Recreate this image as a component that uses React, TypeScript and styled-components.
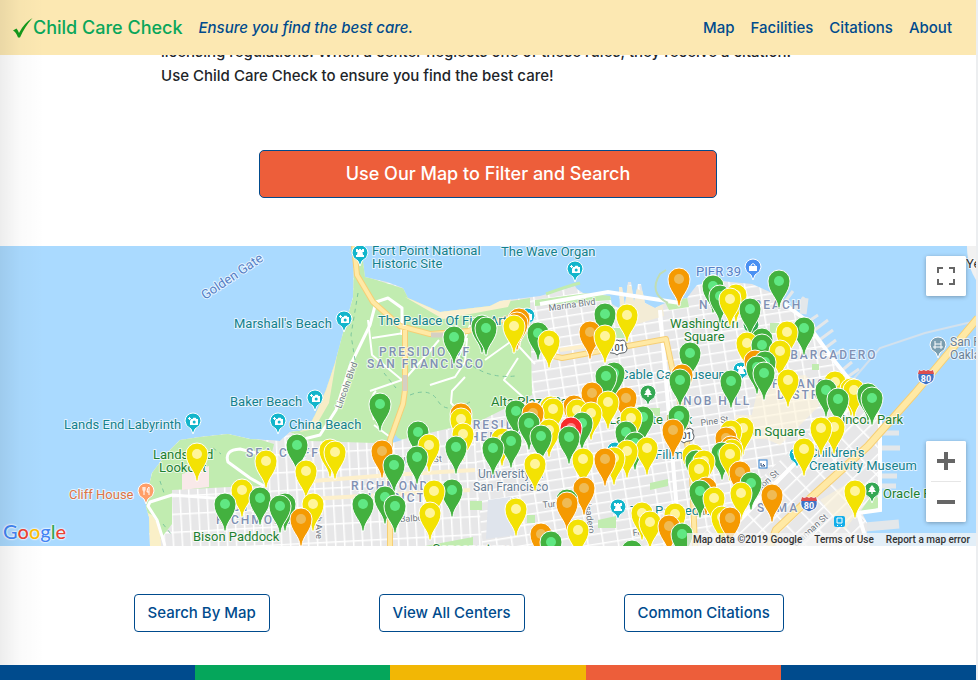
import React from "react";
import styled, { createGlobalStyle } from "styled-components";

const GlobalStyle = createGlobalStyle`
  * { box-sizing: border-box; }
  body { margin: 0; background: #fff; color: #212529; font: 500 15px/24px Inter, sans-serif; }
`;

const navy = "#004b8d";

const Page = styled.div`
  position: relative;
  border-right: 2px solid #eceef0;
`;

const EdgeShade = styled.div`
  position: absolute;
  inset: 0 auto 15px 0;
  width: 44px;
  z-index: 5;
  pointer-events: none;
  background: linear-gradient(to right, rgba(0, 0, 0, 0.07), rgba(0, 0, 0, 0.02) 45%, rgba(0, 0, 0, 0));
`;

const Header = styled.header`
  position: sticky;
  top: 0;
  z-index: 4;
  display: flex;
  align-items: center;
  justify-content: space-between;
  height: 55px;
  padding: 0 24px 0 12px;
  background: #fce8b2;
`;

const Brand = styled.div`
  display: flex;
  align-items: center;
  gap: 16px;
`;

const BrandLink = styled.a`
  display: flex;
  align-items: center;
  color: #0aa65a;
  font-size: 18px;
  text-decoration: none;
`;

const Tagline = styled.em`
  color: ${navy};
`;

const Nav = styled.nav`
  display: flex;
  gap: 16px;
`;

const NavLink = styled.a`
  color: ${navy};
  text-decoration: none;
`;

const Intro = styled.p`
  width: 67%;
  margin: -15px auto 0;
`;

const CtaRow = styled.div`
  display: flex;
  justify-content: center;
  padding: 62px 0 48px;
`;

const Cta = styled.button`
  width: 47%;
  height: 48px;
  border: 1px solid ${navy};
  border-radius: 5px;
  background: #ed5e3a;
  color: #fff;
  font: 500 18px/24px Inter, sans-serif;
`;

const MapFrame = styled.section`
  position: relative;
  height: 300px;
  overflow: hidden;
  background: #aadaff;
`;

const MapSvg = styled.svg`
  display: block;
  width: 100%;
  height: 100%;
  font-family: Roboto, sans-serif;
  font-weight: 400;
`;

const MapButton = styled.button`
  display: flex;
  align-items: center;
  justify-content: center;
  width: 40px;
  height: 40px;
  padding: 0;
  border: 0;
  border-radius: 2px;
  background: #fff;
`;

const ControlBox = styled.div<{ $place: "top" | "bottom" }>`
  position: absolute;
  right: 10px;
  ${(p) => (p.$place === "top" ? "top: 10px;" : "bottom: 24px;")}
  border-radius: 2px;
  background: #fff;
  box-shadow: 0 1px 4px rgba(0, 0, 0, 0.3);
`;

const ControlDivider = styled.div`
  height: 1px;
  margin: 0 5px;
  background: #e6e6e6;
`;

const Attribution = styled.div`
  position: absolute;
  right: 0;
  bottom: 0;
  display: flex;
  gap: 12px;
  height: 13px;
  padding: 1px 6px 0;
  background: rgba(245, 245, 245, 0.75);
  color: #333;
  font: 500 10px/12px Roboto, sans-serif;
`;

const AttributionLink = styled.a`
  color: inherit;
  text-decoration: none;
`;

const GoogleLogo = styled.a`
  position: absolute;
  left: 3px;
  bottom: 2px;
  font: 500 20px/26px Lato, sans-serif;
  text-decoration: none;
  text-shadow: 0 0 2px #fff, 0 0 2px #fff, 0 0 2px #fff;
`;

const Letter = styled.span<{ $color: string }>`
  color: ${(p) => p.$color};
`;

const Actions = styled.div`
  display: grid;
  grid-template-columns: repeat(3, 1fr);
  max-width: 735px;
  margin: 0 auto;
  padding: 48px 0 33px;
`;

const ActionCell = styled.div`
  padding-left: 13px;
`;

const Action = styled.button`
  height: 38px;
  padding: 0 13px;
  border: 1px solid ${navy};
  border-radius: 4px;
  background: #fff;
  color: ${navy};
  font: 500 15px/24px Inter, sans-serif;
  white-space: nowrap;
`;

const Footer = styled.footer`
  display: grid;
  grid-template-columns: repeat(5, 1fr);
  height: 15px;
`;

const Stripe = styled.div<{ $color: string }>`
  background: ${(p) => p.$color};
`;

const Halo = styled.text`
  paint-order: stroke;
  stroke: rgba(255, 255, 255, 0.7);
  stroke-width: 2px;
  stroke-linejoin: round;
`;

type Kind = "poi" | "park" | "area" | "street" | "blue" | "orange" | "campus";
const kinds: Record<Kind, { fill: string; size: number; weight: number; track: number }> = {
  poi: { fill: "#14818c", size: 13, weight: 400, track: 0 },
  park: { fill: "#1d8030", size: 13, weight: 400, track: 0 },
  area: { fill: "#8090b3", size: 12, weight: 500, track: 2 },
  street: { fill: "#6f7780", size: 9, weight: 400, track: 0 },
  blue: { fill: "#5580c6", size: 13, weight: 400, track: 0 },
  orange: { fill: "#dd7344", size: 13, weight: 400, track: 0 },
  campus: { fill: "#6a8096", size: 12, weight: 400, track: 0 },
};

const labels: [string, number, number, Kind, number?][] = [
  ["Fort Point National", 372, 255, "poi"],
  ["Historic Site", 372, 268, "poi"],
  ["The Wave Organ", 501, 256, "poi"],
  ["Marshall's Beach", 234, 328, "poi"],
  ["Baker Beach", 230, 406, "poi"],
  ["China Beach", 289, 429, "poi"],
  ["Lands End Labyrinth", 64, 429, "poi"],
  ["The Palace Of Fine Arts", 378, 325, "poi"],
  ["Cable Car Museum", 620, 379, "poi"],
  ["Children's", 809, 457, "poi"],
  ["Creativity Museum", 809, 470, "poi"],
  ["Fillmore", 655, 459, "poi"],
  ["The Painted Ladies", 630, 515, "poi"],
  ["Washington", 670, 328, "park"],
  ["Square", 684, 341, "park"],
  ["Alta Plaza Park", 491, 406, "park"],
  ["Lafayette Park", 609, 424, "park"],
  ["Union Square", 728, 436, "park"],
  ["Rincon Park", 834, 424, "park"],
  ["Oracle Park", 883, 498, "park"],
  ["Lands End", 153, 459, "park"],
  ["Lookout", 159, 472, "park"],
  ["Bison Paddock", 193, 541, "park"],
  ["Conservatory", 432, 553, "park"],
  ["Cliff House", 69, 499, "orange"],
  ["PIER 39", 696, 276, "blue"],
  ["Golden Gate", 205, 300, "blue", -34],
  ["San Francisco", 950, 346, "campus"],
  ["Oakland Bay", 950, 359, "campus"],
  ["University of", 478, 478, "campus"],
  ["San Francisco", 473, 491, "campus"],
  ["PRESIDIO OF", 379, 356, "area"],
  ["SAN FRANCISCO", 367, 368, "area"],
  ["SEA CLIFF", 246, 457, "area"],
  ["RICHMOND", 351, 490, "area"],
  ["DISTRICT", 358, 502, "area"],
  ["OUTER", 222, 511, "area"],
  ["RICHMOND", 216, 524, "area"],
  ["PRESIDIO", 463, 429, "area"],
  ["HEIGHTS", 470, 441, "area"],
  ["NOB HILL", 683, 405, "area"],
  ["NORTH BEACH", 699, 309, "area"],
  ["EMBARCADERO", 769, 359, "area"],
  ["FINANCIAL", 772, 388, "area"],
  ["DISTRICT", 777, 399, "area"],
  ["SOMA", 757, 512, "area"],
  ["Marina Blvd", 549, 311, "street", -8],
  ["Pine St", 701, 426, "street", -8],
  ["Turk St", 543, 508, "street", -6],
  ["Balboa St", 400, 522, "street", -3],
  ["Clement St", 398, 464, "street", -3],
  ["Lincoln Blvd", 341, 409, "street", -70],
  ["Fell St", 633, 536, "street", -6],
  ["Mission St", 748, 502, "street", -42],
  ["Brannan St", 796, 547, "street", -42],
  ["25th Ave", 315, 504, "street", 88],
  ["Divisadero", 583, 492, "street", 82],
];

const pinColors = {
  g: ["#43b13f", "#60e883"],
  y: ["#f3e203", "#fff59b"],
  o: ["#f59a02", "#efbb55"],
  r: ["#f72b2b", "#ff8787"],
} as const;
type PinColor = keyof typeof pinColors;

/* Centre of each marker's head, grouped by colour. */
const pinGroups: Record<PinColor, [number, number][]> = {
  g: [
    [225, 504], [454, 337], [482, 326], [486, 328], [380, 404], [418, 432], [456, 447], [417, 457],
    [394, 465], [297, 445], [260, 498], [285, 504], [280, 506], [363, 504], [385, 497], [395, 506],
    [452, 490], [538, 333], [605, 314], [713, 286], [720, 296], [690, 353], [680, 380], [614, 373],
    [606, 376], [731, 381], [516, 411], [582, 423], [529, 423], [541, 436], [569, 437], [511, 441],
    [493, 448], [635, 443], [626, 432], [643, 417], [679, 416], [696, 461], [722, 453], [700, 491],
    [567, 500], [551, 542], [682, 534], [632, 551], [779, 281], [750, 309], [804, 328], [762, 339],
    [762, 345], [757, 367], [765, 362], [764, 373], [826, 390], [838, 399], [868, 394], [872, 398],
    [751, 483],
  ],
  y: [
    [197, 454], [242, 490], [461, 419], [463, 434], [429, 445], [330, 450], [335, 452], [266, 461],
    [306, 471], [313, 504], [434, 491], [430, 513], [514, 326], [549, 341], [627, 315], [605, 336],
    [730, 299], [736, 295], [608, 402], [551, 407], [553, 409], [577, 410], [591, 413], [549, 430],
    [502, 439], [535, 464], [583, 459], [614, 458], [627, 451], [631, 418], [647, 448], [693, 455],
    [704, 461], [699, 469], [714, 498], [722, 517], [516, 509], [578, 530], [642, 513], [650, 522],
    [675, 514], [787, 332], [747, 343], [780, 351], [788, 380], [835, 382], [851, 389], [854, 390],
    [743, 428], [731, 431], [732, 450], [730, 454], [821, 428], [834, 427], [804, 449], [741, 493],
    [855, 491],
  ],
  o: [
    [461, 414], [382, 451], [301, 519], [519, 319], [517, 323], [590, 332], [679, 279], [682, 375],
    [592, 393], [626, 398], [533, 413], [574, 406], [605, 459], [673, 430], [706, 488], [730, 518],
    [726, 438], [731, 447], [584, 488], [567, 503], [541, 534], [669, 526], [755, 361], [740, 472],
    [772, 495],
  ],
  r: [[571, 428]],
};

const pins = (Object.keys(pinGroups) as PinColor[])
  .flatMap((c) => pinGroups[c].map(([x, y]) => ({ c, x, y })))
  .sort((a, b) => a.y - b.y);

type Glyph = "camera" | "tower" | "fork" | "bag" | "tree" | "bridge";
const pois: [number, number, string, Glyph][] = [
  [360, 253, "#12b5cb", "tower"],
  [344, 319, "#12b5cb", "camera"],
  [575, 269, "#12b5cb", "camera"],
  [315, 398, "#12b5cb", "camera"],
  [278, 421, "#12b5cb", "camera"],
  [193, 421, "#12b5cb", "camera"],
  [527, 316, "#12b5cb", "camera"],
  [618, 507, "#12b5cb", "tower"],
  [797, 455, "#12b5cb", "camera"],
  [615, 450, "#12b5cb", "camera"],
  [741, 370, "#12b5cb", "tower"],
  [146, 491, "#ff9e67", "fork"],
  [753, 267, "#4a90f2", "bag"],
  [648, 393, "#34a853", "tree"],
  [751, 325, "#34a853", "tree"],
  [872, 490, "#34a853", "tree"],
  [938, 345, "#7b9eb0", "bridge"],
  [515, 505, "#7b9eb0", "bag"],
];

function PoiGlyph({ kind }: { kind: Glyph }) {
  switch (kind) {
    case "camera":
      return (
        <>
          <path d="M-2 -2h1.5l.8-1.2h2.4L3.500-2H5v6h-8V0" fill="#fff" />
          <path d="M-3.500-4v3M-5-2.500h3" stroke="#fff" />
          <circle cx="1.200" cy="1" r="1.500" fill="#12b5cb" />
        </>
      );
    case "tower":
      return <path d="M-4-4h2v1h1v-1h2v1h1v-1h2v3H2.500L3 2h1v2h-8V2h1l.5-3H-4z" fill="#fff" />;
    case "fork":
      return <path d="M-3-4v3q0 1 1 1v4M-1-4v3q0 1-1 1M-2-4v3M3 4v-8q-2 1-2 5h2" fill="none" stroke="#fff" />;
    case "bag":
      return (
        <>
          <path d="M-4-1h8v5h-8z" fill="#fff" />
          <path d="M-2-1v-1q2-3 4 0v1" fill="none" stroke="#fff" />
        </>
      );
    case "tree":
      return <path d="M0-5l3 4H2l2 3H.7v2H-.7V2H-4l2-3h-1z" fill="#fff" />;
    default:
      return <path d="M-3-4v8M3-4v8M-5 2H5M-3-1h6" fill="none" stroke="#fff" />;
  }
}

function Shield({ x, y }: { x: number; y: number }) {
  return (
    <g transform={`translate(${x} ${y})`}>
      <path d="M-7-7l2 1 3-1 2 1 2-1 3 1 2-1Q10 1 6 5L0 8-6 5Q-10 1-7-7z" fill="#3f72c5" stroke="#fff" />
      <path d="M-7-7l2 1 3-1 2 1 2-1 3 1 2-1 1 4H-8z" fill="#dc4f4f" />
      <text y="5" textAnchor="middle" fontSize="9" fontWeight="700" fill="#fff">80</text>
    </g>
  );
}

function Shield101({ x, y }: { x: number; y: number }) {
  return (
    <g transform={`translate(${x} ${y})`}>
      <path d="M-9-6l3-2q3 2 6 0 3 2 6 0l3 2q-1 3 1 6 0 5-5 5-3 0-5 2-2-2-5-2-5 0-5-5 2-3 1-6z" fill="#fff" stroke="#555b60" />
      <text y="3" textAnchor="middle" fontSize="9" fontWeight="500" fill="#4a4f54">101</text>
    </g>
  );
}

function Highway({ d, width = 5 }: { d: string; width?: number }) {
  return (
    <g fill="none" strokeLinejoin="round">
      <path d={d} stroke="#f6cf75" strokeWidth={width + 1} />
      <path d={d} stroke="#ffe9a5" strokeWidth={width - 1} />
    </g>
  );
}

const coast =
  "M150 546L149 517 146 507 148 490 152 473 167 453 180 440 200 437 228 434 250 439 280 441 290 432 307 430 315 415 326 390 335 363 343 333 353 297 354 246H361L365 277 387 282 403 288 408 298 440 312 490 306 500 301 540 296 575 286 577 289 583 293 610 296 612 304 620 309 619 287 622 287 625 306 628 282 631 282 634 302 638 284 641 284 645 303 655 308 665 303 687 298 693 290 697 285 720 281 752 284 770 292 787 303 803 316 820 340 835 365 853 380 867 390 882 417V507L862 513 867 523V546Z";

function CityMap() {
  return (
    <MapSvg viewBox="0 246 976 300" preserveAspectRatio="xMidYMid slice" role="img" aria-label="Map of child care centers in San Francisco">
      <defs>
        <pattern id="west" width="9" height="18" patternUnits="userSpaceOnUse" patternTransform="rotate(-3)">
          <rect width="9" height="18" fill="#e7e7e8" />
          <path d="M0 0H9M0 0V18" stroke="#fff" strokeWidth="3" />
        </pattern>
        <pattern id="north" width="15" height="10" patternUnits="userSpaceOnUse" patternTransform="rotate(-9)">
          <rect width="15" height="10" fill="#e7e7e8" />
          <path d="M0 0H15M0 0V10" stroke="#fff" strokeWidth="3" />
        </pattern>
        <pattern id="soma" width="20" height="13" patternUnits="userSpaceOnUse" patternTransform="rotate(-44)">
          <rect width="20" height="13" fill="#e7e7e8" />
          <path d="M0 0H20M0 0V13" stroke="#fff" strokeWidth="3" />
        </pattern>
        <clipPath id="land"><path d={coast} /></clipPath>
      </defs>

      <rect y="246" width="976" height="300" fill="#aadaff" />
      <path d="M967 246h9v34q-9-14-9-34z" fill="#f1f1f1" />
      <g stroke="#e3e7ea" strokeWidth="5">
        <path d="M784 303l9-12M795 310l9-13M806 323l12-8M812 332l16-12M818 341l15-11M824 349l12-9M830 358l14-9M840 372l12-10M846 378l13-9" strokeWidth="3" />
        <path d="M803 314l2-16" strokeWidth="7" />
        <path d="M882 433h17M882 448h18M882 476h15M882 486h14" />
        <path d="M865 527l34-3" strokeWidth="9" />
      </g>

      <path d={coast} fill="url(#north)" />
      <g clipPath="url(#land)">
        <path d="M140 430H475L482 546H140z" fill="url(#west)" />
        <path d="M870 375L690 546H900V375z" fill="url(#soma)" />
        <path d="M617 280L662 300 664 316 624 328z" fill="#f3ecd6" />
        <path d="M760 380l45-5 25 20-50 50-32-14zM735 415h30v24h-30zM820 500l25-15 18 20-18 25z" fill="#fdf3d7" opacity="0.6" />
        <path d="M310 441L290 432 326 390 353 297 354 246H365L367 277 408 290 440 312 530 298 532 395 480 421 400 440 375 443z" fill="#c1ecb0" />
        <path d="M140 510L150 470 180 437 229 430 274 444 264 486 230 487 172 490V524L155 546z" fill="#c1ecb0" />
        <path d="M182 474l27-8v21l-27 3z" fill="#f9e9e9" />
        <path d="M149 517l-3-5 6 3 8 12 1 19h-12z" fill="#faf0c8" />
        <path d="M405 297l35 13 55-8 18-7-5 12-65 12z" fill="#faf0d0" />
        <path d="M315 413l24-70-10 60-15 26-14 3z" fill="#f7edc7" />
        <path d="M535 300l76-10v10l-76 6zM612 328h14v10h-14zM665 302l22-5 2 10-20 3zM770 323h9v10h-9zM650 408h10v8h-10zM650 483l18-4v7l-18 4zM598 520l18-4v12h-18zM470 501h12v9h-12zM527 515h8v8h-8zM812 364h7v6h-7zM866 515l16-10-8-13-14 20zM425 546l48-9v9z" fill="#c1ecb0" />
        <path d="M488 500l22-3 12 18-6 20-30 4z" fill="#dfe4ec" />
      </g>
      <g fill="none" stroke="#fff" strokeWidth="3" strokeLinejoin="round">
        <path d="M165 546L157 520 148 506 150 502 172 495 240 500M264 486L250 478 228 462Q224 450 240 449L256 453M300 440L320 435 336 410 350 366 370 325 376 302 388 298 402 308 402 335" />
        <path d="M368 320L372 355 402 380 370 391M372 338l32-5M404 380l25-28 10-12M430 385l25-8 10-15 2-24M465 377l-13 14-1 12 10 10M485 360l28-20 22 24M518 358l-14 22 20 18M374 420q-6-22 2-29M470 325l-12 35M374 425L394 440" strokeWidth="2" />
      </g>
      <g fill="none" stroke="#fff" strokeWidth="4">
        <path d="M540 304L608 292 680 303M783 303L803 318 832 358 853 384M863 388L880 420V510L858 513 868 546M715 546L866 390M660 310L680 546" />
      </g>
      <path d="M668 303q-20-10-8-29l6-4" fill="none" stroke="#c1ddb3" strokeWidth="2" />
      <path d="M580 283q-12 3-34 11" fill="none" stroke="#c1ecb0" strokeWidth="3" />
      <path d="M976 321L925 333 880 348 850 383" fill="none" stroke="#d3e1ed" strokeWidth="2" />
      <path d="M393 432l5 6 4 2-10 3z" fill="#aadaff" />
      <g fill="none" stroke="#7dc79d" strokeDasharray="4 4">
        <path d="M358 293l-7 42 4 25M384 373l12 15M410 395q20-8 28 6t32 1M455 350q25 30 60 26M160 481l4 12M163 524l8 10M213 448l8 6" />
      </g>

      <path d="M300 482L390 475 475 470M310 499L470 490M560 350l40-6" fill="none" stroke="#fdf0cc" strokeWidth="4" />
      <Highway d="M354 246L357 275 373 302 400 326 430 334 468 331 515 316 549 355 562 358 606 350 666 339 673 372 682 410 692 475 695 546" />
      <Highway d="M405 330V390L403 404 390 440V546" />
      <path d="M405 375v16M431 335h16" stroke="#d5d0c4" strokeWidth="5" />
      <Highway d="M978 318L915 393 868 446 795 512 776 530 770 546" width={7} />

      {pois.map(([x, y, color, glyph]) => (
        <g key={`${x}-${y}`} transform={`translate(${x} ${y})`}>
          <path d="M0 13L-2 8Q-8 5-8 0A8 8 0 0 1 8 0Q8 5 2 8Z" fill={color} stroke="#fff" strokeWidth="1" />
          <PoiGlyph kind={glyph} />
        </g>
      ))}
      <Shield x={926} y={377} />
      <Shield x={809} y={504} />
      <Shield101 x={617} y={348} />
      <Shield101 x={684} y={436} />
      <rect x="834" y="516" width="11" height="11" rx="2" fill="#12aeea" />
      <path d="M837 518h5v5h-5zM838 525l-1 1M841 525l1 1" fill="none" stroke="#fff" />
      <rect x="759" y="460" width="8" height="8" fill="#fff" stroke="#2c7fcf" />
      <path d="M761 463v3h4l-2-2" fill="none" stroke="#2c4f7f" />

      {labels.map(([text, x, y, kind, angle]) => {
        const k = kinds[kind];
        return (
          <Halo
            key={`${text}-${x}-${y}`}
            x={x}
            y={y}
            fill={k.fill}
            fontSize={k.size}
            fontWeight={k.weight}
            letterSpacing={k.track}
            transform={angle ? `rotate(${angle} ${x} ${y})` : undefined}
          >
            {text}
          </Halo>
        );
      })}
      <Halo x="966" y="268" fontSize="13" fill="#333">Yerba</Halo>

      {pins.map(({ c, x, y }) => (
        <g key={`${c}-${x}-${y}`} transform={`translate(${x} ${y})`}>
          <path d="M-1 27C-1 17-11 12-11 0A11 11 0 0 1 11 0C11 12 1 17 1 27Z" fill={pinColors[c][0]} stroke="#fff" strokeWidth="1" />
          <circle r="5" fill={pinColors[c][1]} />
        </g>
      ))}
    </MapSvg>
  );
}

const logo: [string, string][] = [
  ["G", "#4285f4"], ["o", "#ea4335"], ["o", "#fbbc05"], ["g", "#4285f4"], ["l", "#34a853"], ["e", "#ea4335"],
];

export default function App() {
  return (
    <>
      <GlobalStyle />
      <Page>
        <EdgeShade />
        <Header>
          <Brand>
            <BrandLink href="#">
              <svg width="21" height="22" viewBox="0 0 21 22" aria-hidden="true">
                <path d="M1 13.500L4.500 11.500Q6 13 7 16Q12 6 20.500 1Q12.500 10 8 20.500H6Q4 15 1 13.500Z" fill="#149a1c" />
              </svg>
              Child Care Check
            </BrandLink>
            <Tagline>Ensure you find the best care.</Tagline>
          </Brand>
          <Nav>
            <NavLink href="#map">Map</NavLink>
            <NavLink href="#facilities">Facilities</NavLink>
            <NavLink href="#citations">Citations</NavLink>
            <NavLink href="#about">About</NavLink>
          </Nav>
        </Header>
        <main>
          <Intro>
            licensing regulations. When a center neglects one of these rules, they receive a citation. Use Child Care
            Check to ensure you find the best care!
          </Intro>
          <CtaRow>
            <Cta type="button">Use Our Map to Filter and Search</Cta>
          </CtaRow>
          <MapFrame id="map">
            <CityMap />
            <GoogleLogo href="#google" aria-label="Google">
              {logo.map(([letter, color], i) => (
                <Letter key={i} $color={color}>{letter}</Letter>
              ))}
            </GoogleLogo>
            <Attribution>
              <span>Map data ©2019 Google</span>
              <AttributionLink href="#terms">Terms of Use</AttributionLink>
              <AttributionLink href="#report">Report a map error</AttributionLink>
            </Attribution>
            <ControlBox $place="top">
              <MapButton type="button" aria-label="Toggle fullscreen view">
                <svg width="18" height="18" viewBox="0 0 18 18" fill="none" stroke="#666" strokeWidth="2">
                  <path d="M1 6V1H6M12 1H17V6M17 12V17H12M6 17H1V12" />
                </svg>
              </MapButton>
            </ControlBox>
            <ControlBox $place="bottom">
              <MapButton type="button" aria-label="Zoom in">
                <svg width="18" height="18" viewBox="0 0 18 18" stroke="#666" strokeWidth="4">
                  <path d="M0 9H18M9 0V18" />
                </svg>
              </MapButton>
              <ControlDivider />
              <MapButton type="button" aria-label="Zoom out">
                <svg width="18" height="18" viewBox="0 0 18 18" stroke="#666" strokeWidth="4">
                  <path d="M0 9H18" />
                </svg>
              </MapButton>
            </ControlBox>
          </MapFrame>
          <Actions>
            <ActionCell><Action type="button">Search By Map</Action></ActionCell>
            <ActionCell><Action type="button">View All Centers</Action></ActionCell>
            <ActionCell><Action type="button">Common Citations</Action></ActionCell>
          </Actions>
        </main>
        <Footer>
          {[navy, "#05a65b", "#f2b705", "#ed5e3a", navy].map((c, i) => (
            <Stripe key={i} $color={c} />
          ))}
        </Footer>
      </Page>
    </>
  );
}
